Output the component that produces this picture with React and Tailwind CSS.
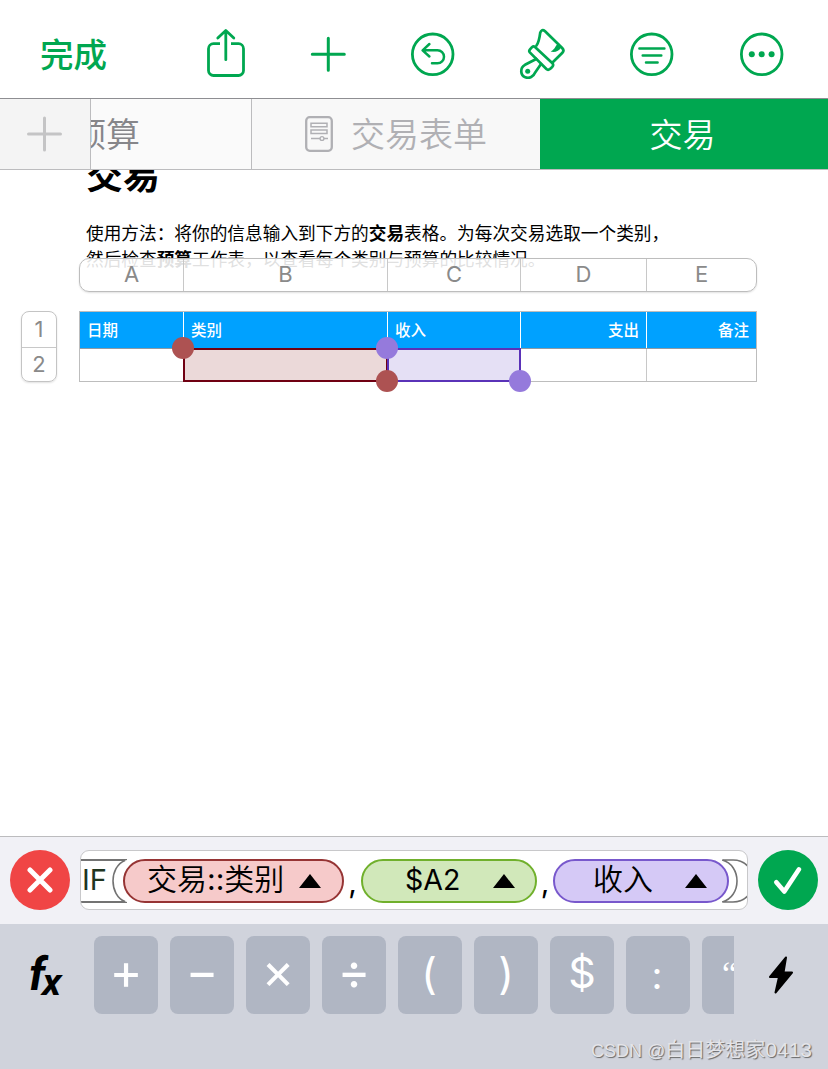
const COLUMNS = [
  { letter: 'A', title: '日期', width: 'w-[104px]', align: 'justify-start' },
  { letter: 'B', title: '类别', width: 'w-[204px]', align: 'justify-start' },
  { letter: 'C', title: '收入', width: 'w-[133px]', align: 'justify-start' },
  { letter: 'D', title: '支出', width: 'w-[126px]', align: 'justify-end' },
  { letter: 'E', title: '备注', width: 'w-[109px]', align: 'justify-end' },
];

const KEYS = [
  { label: '+', size: 'text-[50px] pb-[9px]' },
  { label: '−', size: 'text-[50px] pb-[9px]' },
  { label: '×', size: 'text-[50px] pb-[9px]' },
  { label: '÷', size: 'text-[50px] pb-[9px]' },
  { label: '(', size: 'text-[43px] pb-[4px] pr-[2px]' },
  { label: ')', size: 'text-[43px] pb-[4px]' },
  { label: '$', size: 'text-[43px] pb-[6px]' },
  { label: ':', size: 'text-[38px] pr-[2px]' },
  { label: '“', size: "text-[34px] pb-[2px] pr-[9px] font-['Liberation_Serif',serif]" },
];

function Icon({ className, children }) {
  return (
    <svg
      viewBox="0 0 56 56"
      className={`size-14 shrink-0 ${className}`}
      fill="none"
      stroke="currentColor"
      strokeWidth="2.8"
      strokeLinecap="round"
      strokeLinejoin="round"
    >
      {children}
    </svg>
  );
}

function Toolbar() {
  return (
    <header className="flex h-[99px] items-center border-b border-[#8e8e92] pt-[10px] text-[#00a750]">
      <button type="button" className="ml-[40px] w-[158px] pt-[3px] text-left text-[33.5px] leading-none font-medium">
        完成
      </button>
      <Icon className="ml-0">
        <path d="M22 17.7h-6.5a5 5 0 0 0-5 5v21.8a5 5 0 0 0 5 5h25a5 5 0 0 0 5-5V22.7a5 5 0 0 0-5-5H33" strokeLinecap="butt" />
        <path d="M27.8 33.7V4.6M19.8 12l8-7.6 8 7.6" />
      </Icon>
      <Icon className="ml-[46px]">
        <path d="M28.3 12.3v32M12.3 28.3h32" strokeWidth="3" />
      </Icon>
      <Icon className="ml-[49px]">
        <circle cx="27.7" cy="28.3" r="20.3" />
        <path d="M24.4 18l-6.8 6.3 6.8 6.2M18 24.3h14.5a6.5 6.5 0 0 1 0 13H27" strokeWidth="2.5" />
      </Icon>
      <Icon className="ml-[54px]">
        <g strokeWidth="2.7">
          <path d="M21.5 19.5Q24 16 25.2 6.8Q26.8 2.4 29.8 5L47.2 22Q49.6 24.5 47.4 26.8L37.5 36.5" />
          <path d="M19.7 20.7L37.7 37.4Q38.8 39 37.2 41L35 43Q33 44.5 31.4 43L14.8 26.4Q13.6 25 15 23.4L17 21.2Q18.4 19.8 19.7 20.7Z" />
          <path d="M21.2 33L10 38.8C4.5 42 5.5 49.5 10.2 51.2C14.5 52.8 18.5 50.5 20 46.7L26 38" />
        </g>
        <circle cx="12.7" cy="45.3" r="2.5" fill="currentColor" stroke="none" />
        <path d="M43.6 17.2C40 19 41 22.6 35.6 25.6C39.5 26.7 44 25.5 46.6 21Z" fill="currentColor" stroke="none" />
      </Icon>
      <Icon className="ml-[53px]">
        <circle cx="27.7" cy="28.3" r="20.3" />
        <path d="M15.4 22.5h25M18.7 29.5h18.6M22 36.6h11.6" strokeWidth="2.5" />
      </Icon>
      <Icon className="ml-[54px]">
        <circle cx="27.7" cy="28.3" r="20.3" />
        <g fill="currentColor" stroke="none">
          <circle cx="17.8" cy="28.3" r="3" />
          <circle cx="27.7" cy="28.3" r="3" />
          <circle cx="37.6" cy="28.3" r="3" />
        </g>
      </Icon>
    </header>
  );
}

function SheetTabs() {
  return (
    <nav className="flex h-[71px] border-b border-[#bcbcbe] text-[34px] leading-none font-[350]">
      <button type="button" className="flex w-[91px] items-center border-r border-[#bcbcbe] bg-[#f4f4f4] pl-[27px]">
        <svg viewBox="0 0 36 36" className="size-9" stroke="#c4c4c5" strokeWidth="3" strokeLinecap="round">
          <path d="M17.5 2v32M1.5 18h32" />
        </svg>
      </button>
      <div className="flex w-[161px] items-center overflow-hidden border-r border-[#bcbcbe] bg-[#fafafa] text-[#86868a]">
        <span className="-ml-[19px] pt-[2px]">预算</span>
      </div>
      <div className="flex w-[288px] items-center bg-[#f8f8f8] pl-[53px] text-[#b0b0b4]">
        <svg viewBox="0 0 28 36" className="mr-[18px] h-9 w-7" fill="none" stroke="currentColor">
          <rect x="1.2" y="1.2" width="25.6" height="33.6" rx="3.5" strokeWidth="2.3" />
          <path d="M6 7.2h16v3.5H6zM6 14h16v3.5H6zM6 22.5h9M19 22.5h4" strokeWidth="1.5" />
          <circle cx="17" cy="22.5" r="1.9" strokeWidth="1.4" />
        </svg>
        <span className="pt-[2px]">交易表单</span>
      </div>
      <div className="flex flex-1 items-center justify-center bg-[#00a750] pt-[2px] pr-[3px] text-[33px] text-white">
        交易
      </div>
    </nav>
  );
}

function Handle({ className }) {
  return <span className={`absolute size-[22px] rounded-full ${className}`} />;
}

function Sheet() {
  return (
    <main className="h-[666px] overflow-hidden bg-white">
      <h1 className="-mt-[15px] ml-[86px] h-[59px] text-[37px] leading-[42px] font-bold text-black">交易</h1>
      <p className="mt-[7px] ml-[86px] h-[37px] text-[17.68px] leading-[26px] whitespace-nowrap text-black">
        使用方法：将你的信息输入到下方的<b>交易</b>表格。为每次交易选取一个类别，
        <br />
        然后检查<b>预算</b>工作表，以查看每个类别与预算的比较情况。
      </p>
      <div className="relative ml-[79px] flex h-[34px] w-[678px] rounded-[10px] border border-[#bdbdbd] bg-white/88 text-[22px] text-[#8a8a8a] shadow-[0_1px_2px_rgba(0,0,0,0.12)]">
        {COLUMNS.map((col) => (
          <div
            key={col.letter}
            className={`flex items-center justify-center border-r border-[#c8c8c8] pb-[2px] last:flex-1 last:border-r-0 ${col.width}`}
          >
            {col.letter}
          </div>
        ))}
      </div>

      <div className="mt-[19px] flex">
        <div className="mr-[22px] ml-[21px] flex h-[71px] w-[36px] flex-col rounded-[8px] border border-[#c4c4c4] text-[22px] text-[#8a8a8a] shadow-[0_1px_2px_rgba(0,0,0,0.12)]">
          <div className="flex h-[37px] items-center justify-center border-b border-[#c8c8c8]">1</div>
          <div className="flex flex-1 items-center justify-center">2</div>
        </div>
        <div className="relative h-[71px] w-[678px] border border-[#bdbdbd]">
          <div className="flex h-[37px] border-b border-[#8f9aa3] bg-[#00a1ff] text-[15.5px] font-medium text-white">
            {COLUMNS.map((col) => (
              <div
                key={col.letter}
                className={`flex items-center border-r border-white px-[7px] pt-[2px] last:flex-1 last:border-r-0 ${col.width} ${col.align}`}
              >
                {col.title}
              </div>
            ))}
          </div>
          <div className="flex h-[32px]">
            {COLUMNS.map((col) => (
              <div key={col.letter} className={`border-r border-[#c8c8c8] last:flex-1 last:border-r-0 ${col.width}`} />
            ))}
          </div>
          <div className="absolute top-[36px] left-[103px] h-[34px] w-[205px] border-2 border-[#700012] bg-[#ebd9d9]" />
          <div className="absolute top-[36px] left-[307px] h-[34px] w-[134px] border-2 border-[#5a32b8] bg-[#e5e0f5]" />
          <Handle className="top-[25px] left-[92px] bg-[#ad5252]" />
          <Handle className="top-[25px] left-[296px] bg-[#957adc]" />
          <Handle className="top-[58px] left-[296px] bg-[#ad5252]" />
          <Handle className="top-[58px] left-[429px] bg-[#957adc]" />
        </div>
      </div>
    </main>
  );
}

function Token({ className, children }) {
  return (
    <div className={`flex h-[44px] shrink-0 items-center justify-between rounded-full border-2 pb-px ${className}`}>
      <span className="-mt-[2px]">{children}</span>
      <svg viewBox="0 0 22 14" className="h-[14px] w-[22px]">
        <path d="M11 0L22 14H0z" />
      </svg>
    </div>
  );
}

function FormulaBar() {
  return (
    <section className="flex h-[88px] items-center border-t border-[#bcbcbe] bg-[#f1f1f6] px-[10px] pb-px">
      <button type="button" className="flex size-[60px] items-center justify-center rounded-full bg-[#f04545]">
        <svg viewBox="0 0 26 26" className="size-[26px]" stroke="white" strokeWidth="5" strokeLinecap="round">
          <path d="M3 3l20 20M23 3L3 23" />
        </svg>
      </button>
      <div className="mx-[10px] flex h-[60px] w-[668px] items-center overflow-hidden rounded-[9px] border border-[#c8c8ca] bg-white pt-[2px] text-[30px] font-[350] text-black">
        <div className="flex h-[44px] w-[42px] shrink-0 items-center">
          <span className="w-[32px] shrink-0 pb-[3px] pl-[1px] text-[29px] font-normal text-[#20351f]">IF</span>
          <svg viewBox="0 0 47 44" className="-ml-[32px] h-[44px] w-[47px] shrink-0" fill="none" stroke="#737373">
            <path d="M0 1h46M0 43h46" strokeWidth="2" />
            <path d="M46 1C28 4 28 40 46 43" stroke="none" fill="white" />
            <path d="M44 1.5C28 8 28 36 44 42.5" strokeWidth="1.6" />
          </svg>
        </div>
        <Token className="relative w-[221px] border-[#963434] bg-[#f6caca] pr-[21px] pl-[22px]">
          交易<span className="font-normal">::</span>类别
        </Token>
        <span className="w-[17px] shrink-0 pt-[3px] text-center font-normal">,</span>
        <Token className="w-[176px] border-[#70b02c] bg-[#d1e8ba] pr-[20px] pl-[42px]">
          <span className="text-[28.5px] font-normal">$A2</span>
        </Token>
        <span className="w-[16px] shrink-0 pt-[3px] text-center font-normal">,</span>
        <Token className="relative w-[176px] border-[#7858cc] bg-[#d5c9f6] pr-[20px] pl-[38px]">收入</Token>
        <svg viewBox="0 0 26 44" className="-ml-[7px] h-[44px] w-[26px] shrink-0" fill="none" stroke="#737373" strokeWidth="1.6">
          <path d="M0 1C20 6 20 38 0 43M1 1h10C38 1 38 43 11 43H1" />
        </svg>
      </div>
      <button type="button" className="flex size-[60px] items-center justify-center rounded-full bg-[#00a750]">
        <svg viewBox="0 0 30 30" className="size-[30px]" fill="none" stroke="white" strokeWidth="4.6" strokeLinecap="round" strokeLinejoin="round">
          <path d="M3.300 17.300l8 9.200L26 4.300" />
        </svg>
      </button>
    </section>
  );
}

function Keyboard() {
  return (
    <footer className="flex h-[145px] flex-col bg-[#d0d3dc]">
      <div className="flex h-[90px] items-end">
        <div className="flex h-[78px] w-[94px] items-center pl-[29px] font-['Roboto',sans-serif] leading-none font-bold text-black italic">
          <span className="pb-[2px] text-[46px]">f</span>
          <span className="-ml-[3px] pt-[13px] font-['Open_Sans',sans-serif] text-[36px]">x</span>
        </div>
        <div className="flex w-[640px] gap-[12px] overflow-hidden">
          {KEYS.map((key) => (
            <button
              key={key.label}
              type="button"
              className={`flex h-[78px] w-[64px] shrink-0 items-center justify-center rounded-[8px] bg-[#b0b6c3] leading-none text-white ${key.size}`}
            >
              {key.label}
            </button>
          ))}
        </div>
        <div className="flex h-[78px] flex-1 items-center justify-center">
          <svg viewBox="0 0 24 38" className="h-[38px] w-[24px]" stroke="black" strokeWidth="2" strokeLinejoin="round">
            <path d="M17 1.500L1 21h9L6.500 36.500L23 16.500h-8.500z" />
          </svg>
        </div>
      </div>
      <div className="mt-auto mr-[16px] mb-[5px] text-right font-['Liberation_Sans','Noto_Sans_CJK_SC',sans-serif] text-[20px] leading-[26px] text-[#e4e4e8] [text-shadow:1px_1px_1px_#666]">
        <span className="text-[18px]">CSDN @</span>
        白日梦想家
        <span className="text-[21px]">0413</span>
      </div>
    </footer>
  );
}

export default function App() {
  return (
    <div className="h-[1069px] w-[828px] overflow-hidden bg-white font-['Inter','Noto_Sans_CJK_SC',sans-serif]">
      <Toolbar />
      <SheetTabs />
      <Sheet />
      <FormulaBar />
      <Keyboard />
    </div>
  );
}
